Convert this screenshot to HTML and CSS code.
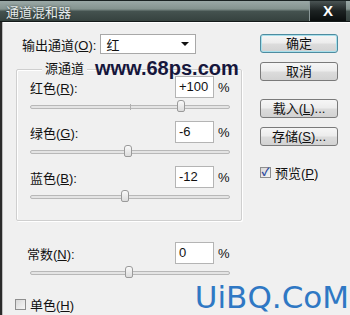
FILE: index.html
```html
<!DOCTYPE html>
<html lang="zh-CN">
<head>
    <meta charset="UTF-8">
    <title>通道混和器</title>
    <link rel="stylesheet" href="styles.css">
</head>
<body>
    <div class="window">
        <div class="titlebar">
            <span class="title">通道混和器</span>
            <span class="close">X</span>
        </div>
        <div class="content">
            <div class="main">
                <div class="out-row">
                    <span class="label">输出通道(<u>O</u>):</span>
                    <div class="select"><span>红</span><span class="arrow"></span></div>
                </div>
                <div class="group">
                    <div class="group-title">源通道</div>
                    <div class="channel">
                        <div class="row"><span class="label">红色(<u>R</u>):</span><span class="field">+100</span><span class="pct">%</span></div>
                        <div class="slider center-tick"><span class="thumb" style="left: 150px"></span></div>
                    </div>
                    <div class="channel">
                        <div class="row"><span class="label">绿色(<u>G</u>):</span><span class="field">-6</span><span class="pct">%</span></div>
                        <div class="slider"><span class="thumb" style="left: 97px"></span></div>
                    </div>
                    <div class="channel">
                        <div class="row"><span class="label">蓝色(<u>B</u>):</span><span class="field">-12</span><span class="pct">%</span></div>
                        <div class="slider"><span class="thumb" style="left: 94px"></span></div>
                    </div>
                    <div class="mark-68">www.68ps.com</div>
                </div>
                <div class="constant">
                    <div class="row"><span class="label">常数(<u>N</u>):</span><span class="field">0</span><span class="pct">%</span></div>
                    <div class="slider"><span class="thumb" style="left: 98px"></span></div>
                </div>
                <label class="check mono"><span class="box"></span><span>单色(<u>H</u>)</span></label>
            </div>
            <div class="side">
                <button class="btn default">确定</button>
                <button class="btn">取消</button>
                <button class="btn gap">载入(<u>L</u>)...</button>
                <button class="btn">存储(<u>S</u>)...</button>
                <label class="check preview"><span class="box checked">✓</span><span>预览(<u>P</u>)</span></label>
            </div>
            <div class="mark-uibq">UiBQ.CoM</div>
        </div>
    </div>
</body>
</html>
```

FILE: styles.css
```css
body {
    margin: 0;
    font-family: "Liberation Sans", "Noto Sans CJK SC", sans-serif;
    font-size: 13px;
    color: #111;
    background: #f0f0f0;
}
u {
    text-decoration: underline;
    text-underline-offset: 1px;
}
.window {
    width: 350px;
    height: 315px;
    overflow: hidden;
    background: #f0f0f0;
}
.titlebar {
    height: 20px;
    border-top: 1px solid #1a2222;
    border-bottom: 1px solid #141a1a;
    box-shadow: 0 1px 0 #ffffff;
    background: linear-gradient(180deg, #9aa8a6 0%, #84938f 40%, #44524f 52%, #36423f 100%);
    display: flex;
    align-items: center;
    justify-content: space-between;
}
.title {
    padding-left: 6px;
    color: #e4eaea;
    font-size: 13px;
    text-shadow: 0 0 2px #2a3434;
}
.close {
    width: 36px;
    height: 20px;
    margin-right: 4px;
    background: linear-gradient(180deg, #4a5454 0%, #1c2222 50%, #0a0e0e 100%);
    border-left: 1px solid #8a9898;
    color: #ffffff;
    font-weight: bold;
    font-size: 15px;
    text-align: center;
    line-height: 20px;
}
.content {
    position: relative;
    height: 293px;
    border-left: 2px solid #2a2a2a;
    box-shadow: inset 1px 0 0 #bcbcbc;
    display: flex;
    gap: 18px;
    padding-left: 14px;
}
.main {
    width: 226px;
    padding-top: 11px;
}
.out-row {
    display: flex;
    align-items: center;
    gap: 4px;
    padding-left: 6px;
    height: 22px;
}
.select {
    width: 96px;
    height: 20px;
    border: 1px solid #a8a8a8;
    background: #ffffff;
    display: flex;
    align-items: center;
    justify-content: space-between;
    padding: 0 6px 0 5px;
    box-sizing: border-box;
}
.arrow {
    width: 0;
    height: 0;
    border-left: 4px solid transparent;
    border-right: 4px solid transparent;
    border-top: 4px solid #111;
}
.group {
    position: relative;
    margin-top: 14px;
    height: 150px;
    border: 1px solid #cfcfcf;
    box-shadow: inset 1px 1px 0 #ffffff, 1px 1px 0 #ffffff;
    border-radius: 2px;
    padding: 0 7px 0 13px;
}
.group-title {
    width: fit-content;
    margin: -8px 0 0 12px;
    padding: 0 3px;
    line-height: 14px;
    background: #f0f0f0;
}
.channel {
    height: 45px;
}
.group .channel:first-of-type {
    margin-top: 6px;
}
.row {
    display: flex;
    align-items: center;
    height: 22px;
}
.row .label {
    flex: 1;
}
.field {
    width: 39px;
    height: 22px;
    box-sizing: border-box;
    border: 1px solid #b4b4b4;
    background: #ffffff;
    padding-left: 3px;
    line-height: 20px;
}
.pct {
    width: 16px;
    padding-left: 4px;
}
.slider {
    position: relative;
    width: 200px;
    height: 4px;
    margin-top: 7px;
    border: 1px solid #b8b8b8;
    border-radius: 3px;
    background: #e4e4e4;
    box-sizing: border-box;
}
.center-tick::before {
    content: "";
    position: absolute;
    left: 99px;
    top: -2px;
    width: 1px;
    height: 6px;
    background: #b0b0b0;
}
.thumb {
    position: absolute;
    top: -6px;
    width: 8px;
    height: 12px;
    margin-left: -4px;
    border: 1px solid #9a9a9a;
    border-radius: 3px 3px 2px 2px;
    background: linear-gradient(180deg, #fafafa, #dcdcdc);
    box-sizing: border-box;
}
.constant {
    margin-top: 21px;
    padding-left: 11px;
    width: 207px;
}
.constant .slider {
    margin-left: 3px;
}
.check {
    display: flex;
    align-items: center;
    gap: 4px;
}
.box {
    width: 11px;
    height: 11px;
    border: 1px solid #8e8e8e;
    background: linear-gradient(135deg, #d8d8d8, #f6f6f6);
    box-sizing: border-box;
    font-size: 11px;
    line-height: 9px;
    text-align: center;
    color: #2a4aa0;
    font-weight: bold;
}
.mono {
    margin-top: 20px;
    margin-left: -1px;
}
.side {
    width: 78px;
    padding-top: 12px;
    display: flex;
    flex-direction: column;
}
.btn {
    height: 19px;
    margin-bottom: 9px;
    padding: 0;
    font-family: inherit;
    font-size: 13px;
    color: #111;
    border: 1px solid #7a7a7a;
    border-radius: 3px;
    background: linear-gradient(180deg, #f6f6f6 0%, #ececec 48%, #dcdcdc 52%, #d2d2d2 100%);
    line-height: 16px;
}
.btn.default {
    border-color: #4e8ca0;
    box-shadow: inset 0 0 0 1px #a8e0ec;
}
.btn.gap {
    margin-top: 9px;
}
.preview {
    margin-top: 8px;
}
.mark-68 {
    position: absolute;
    left: 78px;
    top: -13px;
    font-family: "Liberation Sans", sans-serif;
    font-weight: bold;
    font-size: 20px;
    color: #16163c;
}
.mark-uibq {
    position: absolute;
    right: 1px;
    bottom: 0;
    font-family: "DejaVu Sans", sans-serif;
    font-size: 31px;
    line-height: 36px;
    color: #2f78c4;
}
```
